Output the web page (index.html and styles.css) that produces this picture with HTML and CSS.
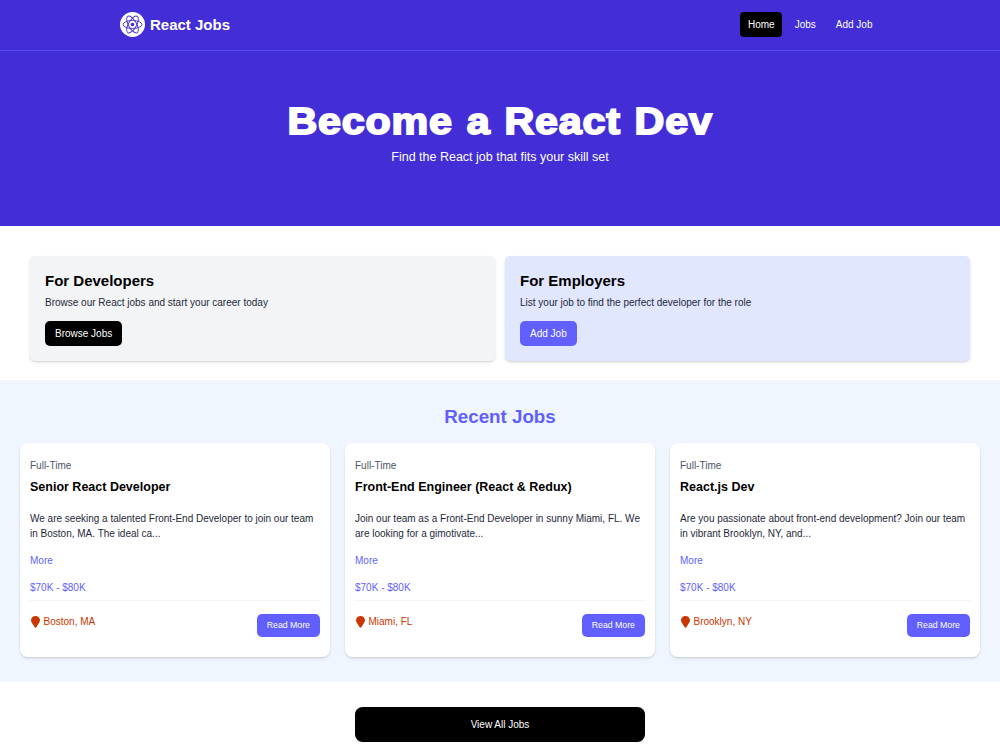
FILE: index.html
```html
<!DOCTYPE html>
<html lang="en">
<head>
    <meta charset="UTF-8">
    <title>React Jobs</title>
    <link rel="stylesheet" href="styles.css">
</head>
<body>
    <nav class="navbar">
        <div class="nav-inner">
            <a class="brand" href="#">
                <svg class="logo" viewBox="0 0 50 50">
                    <circle cx="25" cy="25" r="25" fill="#fff"/>
                    <g fill="none" stroke="#432dd7" stroke-width="1.8">
                        <ellipse cx="25" cy="25" rx="19" ry="8"/>
                        <ellipse cx="25" cy="25" rx="19" ry="8" transform="rotate(60 25 25)"/>
                        <ellipse cx="25" cy="25" rx="19" ry="8" transform="rotate(120 25 25)"/>
                    </g>
                    <circle cx="25" cy="25" r="3.6" fill="#432dd7"/>
                </svg>
                <span>React Jobs</span>
            </a>
            <div class="nav-links">
                <a class="active" href="#">Home</a>
                <a href="#">Jobs</a>
                <a href="#">Add Job</a>
            </div>
        </div>
    </nav>

    <section class="hero">
        <h1>Become a React Dev</h1>
        <p>Find the React job that fits your skill set</p>
    </section>

    <section class="boxes">
        <div class="box box-gray">
            <h2>For Developers</h2>
            <p>Browse our React jobs and start your career today</p>
            <a class="btn btn-black" href="#">Browse Jobs</a>
        </div>
        <div class="box box-indigo">
            <h2>For Employers</h2>
            <p>List your job to find the perfect developer for the role</p>
            <a class="btn" href="#">Add Job</a>
        </div>
    </section>

    <section class="recent">
        <h2>Recent Jobs</h2>
        <div class="jobs">
            <div class="job">
                <div class="type">Full-Time</div>
                <h3>Senior React Developer</h3>
                <p>We are seeking a talented Front-End Developer to join our team in Boston, MA. The ideal ca...</p>
                <button class="more">More</button>
                <div class="salary">$70K - $80K</div>
                <div class="job-footer">
                    <div class="location">
                        <svg class="pin" viewBox="0 0 9 12"><path d="M4.500 0C2 0 0 1.900 0 4.300 0 6.500 2.300 8.500 3.500 11Q4.500 12.500 5.500 11C6.700 8.500 9 6.500 9 4.300 9 1.900 7 0 4.500 0z"/></svg>
                        Boston, MA
                    </div>
                    <a class="btn btn-small" href="#">Read More</a>
                </div>
            </div>
            <div class="job">
                <div class="type">Full-Time</div>
                <h3>Front-End Engineer (React &amp; Redux)</h3>
                <p>Join our team as a Front-End Developer in sunny Miami, FL. We are looking for a gimotivate...</p>
                <button class="more">More</button>
                <div class="salary">$70K - $80K</div>
                <div class="job-footer">
                    <div class="location">
                        <svg class="pin" viewBox="0 0 9 12"><path d="M4.500 0C2 0 0 1.900 0 4.300 0 6.500 2.300 8.500 3.500 11Q4.500 12.500 5.500 11C6.700 8.500 9 6.500 9 4.300 9 1.900 7 0 4.500 0z"/></svg>
                        Miami, FL
                    </div>
                    <a class="btn btn-small" href="#">Read More</a>
                </div>
            </div>
            <div class="job">
                <div class="type">Full-Time</div>
                <h3>React.js Dev</h3>
                <p>Are you passionate about front-end development? Join our team in vibrant Brooklyn, NY, and...</p>
                <button class="more">More</button>
                <div class="salary">$70K - $80K</div>
                <div class="job-footer">
                    <div class="location">
                        <svg class="pin" viewBox="0 0 9 12"><path d="M4.500 0C2 0 0 1.900 0 4.300 0 6.500 2.300 8.500 3.500 11Q4.500 12.500 5.500 11C6.700 8.500 9 6.500 9 4.300 9 1.900 7 0 4.500 0z"/></svg>
                        Brooklyn, NY
                    </div>
                    <a class="btn btn-small" href="#">Read More</a>
                </div>
            </div>
        </div>
    </section>

    <section class="view-all">
        <a href="#">View All Jobs</a>
    </section>
</body>
</html>
```
FILE: styles.css
```css
*{
    box-sizing: border-box;
    margin: 0;
    padding: 0;
}
body{
    font-family: Arial, "Liberation Sans", sans-serif;
    font-size: 10px;
    line-height: 15px;
    color: #000;
    background: #fff;
}
a{
    color: inherit;
    text-decoration: none;
}
.navbar{
    background: #432dd7;
    border-bottom: 1px solid #5549f0;
    color: #fff;
}
.nav-inner{
    display: flex;
    align-items: center;
    justify-content: space-between;
    width: 760px;
    height: 50px;
    margin: 0 auto;
    padding-bottom: 1px;
}
.brand{
    display: flex;
    align-items: center;
    gap: 5px;
    font-size: 15px;
    font-weight: bold;
}
.logo{
    width: 25px;
    height: 25px;
}
.nav-links{
    display: flex;
    gap: 5px;
}
.nav-links a{
    padding: 5px 7.5px;
    border-radius: 4px;
}
.nav-links .active{
    background: #000;
}
.hero{
    height: 174.5px;
    padding-top: 52px;
    background: #432dd7;
    color: #fff;
    text-align: center;
}
.hero h1{
    width: fit-content;
    margin: 0 auto;
    font-size: 36.5px;
    font-weight: bold;
    line-height: 37.5px;
    letter-spacing: .7px;
    word-spacing: 1.5px;
    white-space: nowrap;
    transform: scaleX(1.13);
    -webkit-text-stroke: 1.8px #fff;
}
.hero p{
    margin-top: 8px;
    font-size: 12.5px;
    line-height: 17.5px;
}
.boxes{
    display: grid;
    grid-template-columns: 1fr 1fr;
    gap: 10px;
    padding: 30px 30px 19.5px;
}
.box{
    padding: 15px;
    border-radius: 5px;
    box-shadow: 0 2px 4px -1px rgba(0,0,0,.1), 0 1px 2px rgba(0,0,0,.1);
}
.box-gray{
    background: #f3f4f6;
}
.box-indigo{
    background: #e0e7ff;
}
.box h2{
    font-size: 15px;
    line-height: 20px;
}
.box p{
    margin: 4.5px 0 10.5px;
    color: #1e2939;
}
.btn{
    display: inline-block;
    padding: 5px 10px;
    border-radius: 5px;
    background: #615fff;
    color: #fff;
}
.btn-black{
    background: #000;
}
.recent{
    height: 302px;
    padding: 26px 20px 24px;
    background: #eff6ff;
}
.recent h2{
    margin-bottom: 14px;
    font-size: 18.75px;
    line-height: 22.5px;
    color: #615fff;
    text-align: center;
}
.jobs{
    display: grid;
    grid-template-columns: repeat(3, 1fr);
    gap: 15px;
}
.job{
    height: 214px;
    padding: 15px 10px;
    border-radius: 7.5px;
    background: #fff;
    box-shadow: 0 2px 4px -1px rgba(0,0,0,.1), 0 1px 2px rgba(0,0,0,.1);
}
.type{
    color: #4a5565;
}
.job h3{
    margin: 6px 0 14.5px;
    font-size: 12.5px;
    line-height: 17.5px;
}
.job p{
    color: #1e2939;
}
.more{
    display: block;
    margin: 12px 0 12.5px;
    border: none;
    background: none;
    font: inherit;
    color: #615fff;
}
.salary{
    padding-bottom: 5px;
    border-bottom: 1px solid #f3f4f6;
    color: #615fff;
}
.job-footer{
    display: flex;
    align-items: flex-start;
    justify-content: space-between;
    margin-top: 13px;
}
.location{
    display: flex;
    align-items: center;
    gap: 3.5px;
    padding-left: 1px;
    color: #ca3500;
}
.pin{
    width: 9px;
    height: 12px;
    fill: #ca3500;
}
.btn-small{
    font-size: 8.75px;
    line-height: 12.5px;
}
.view-all{
    padding-top: 25px;
}
.view-all a{
    display: block;
    width: 290px;
    margin: 0 auto;
    padding: 10px;
    border-radius: 7.5px;
    background: #000;
    color: #fff;
    text-align: center;
}
```
